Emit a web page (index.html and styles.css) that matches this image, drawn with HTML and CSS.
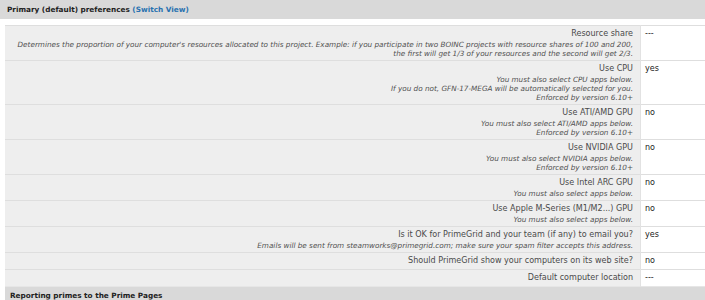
FILE: index.html
```html
<!DOCTYPE html>
<html>
<head>
<meta charset="utf-8">
<link rel="stylesheet" href="styles.css">
</head>
<body>
<div class="section-head">Primary (default) preferences <a href="#">(Switch View)</a></div>
<table class="prefs">
  <tr>
    <td class="name">Resource share<p class="desc">Determines the proportion of your computer's resources allocated to this project. Example: if you participate in two BOINC projects with resource shares of 100 and 200,<br>the first will get 1/3 of your resources and the second will get 2/3.</p></td>
    <td class="val">---</td>
  </tr>
  <tr>
    <td class="name">Use CPU<p class="desc">You must also select CPU apps below.<br>If you do not, GFN-17-MEGA will be automatically selected for you.<br>Enforced by version 6.10+</p></td>
    <td class="val">yes</td>
  </tr>
  <tr>
    <td class="name">Use ATI/AMD GPU<p class="desc">You must also select ATI/AMD apps below.<br>Enforced by version 6.10+</p></td>
    <td class="val">no</td>
  </tr>
  <tr>
    <td class="name">Use NVIDIA GPU<p class="desc">You must also select NVIDIA apps below.<br>Enforced by version 6.10+</p></td>
    <td class="val">no</td>
  </tr>
  <tr>
    <td class="name">Use Intel ARC GPU<p class="desc">You must also select apps below.</p></td>
    <td class="val">no</td>
  </tr>
  <tr>
    <td class="name">Use Apple M-Series (M1/M2...) GPU<p class="desc">You must also select apps below.</p></td>
    <td class="val">no</td>
  </tr>
  <tr>
    <td class="name">Is it OK for PrimeGrid and your team (if any) to email you?<p class="desc">Emails will be sent from steamworks@primegrid.com; make sure your spam filter accepts this address.</p></td>
    <td class="val">yes</td>
  </tr>
  <tr>
    <td class="name">Should PrimeGrid show your computers on its web site?</td>
    <td class="val">no</td>
  </tr>
  <tr>
    <td class="name">Default computer location</td>
    <td class="val">---</td>
  </tr>
  <tr class="sub-head">
    <th colspan="2">Reporting primes to the Prime Pages</th>
  </tr>
</table>
</body>
</html>
```
FILE: styles.css
```css
html, body {
  margin: 0;
  padding: 0;
  background: #fff;
  overflow: hidden;
}
body {
  font-family: "DejaVu Sans", Verdana, sans-serif;
  color: #333;
}
.section-head {
  background: #d9d9d9;
  height: 19px;
  line-height: 19px;
  padding-left: 7px;
  font-weight: bold;
  font-size: 7.3px;
  color: #222;
  margin-bottom: 6px;
}
.section-head a {
  color: #2a72b0;
  text-decoration: none;
}
.prefs {
  margin-left: 5px;
  width: 700px;
  border-collapse: collapse;
  border-spacing: 0;
}
.prefs td {
  border-top: 1px solid #dedede;
  vertical-align: top;
  line-height: 12px;
  font-size: 8.05px;
}
.name {
  background: #eee;
  text-align: right;
  width: 624px;
  padding: 2px 7px 2px 4px;
  color: #4a4a4a;
  white-space: nowrap;
  border-right: 1px solid #e2e2e2;
}
.desc {
  margin: 0;
  font-style: italic;
  font-size: 7.25px;
  line-height: 9px;
  color: #505050;
}
.val {
  background: #fff;
  color: #222;
  padding: 2px 4px;
}
.sub-head th {
  background: #d9d9d9;
  text-align: left;
  font-weight: bold;
  font-size: 7.3px;
  color: #222;
  padding: 3px 5px;
  height: 14px;
  vertical-align: top;
  line-height: 12px;
  border-top: 1px solid #e6e6e6;
}
```
